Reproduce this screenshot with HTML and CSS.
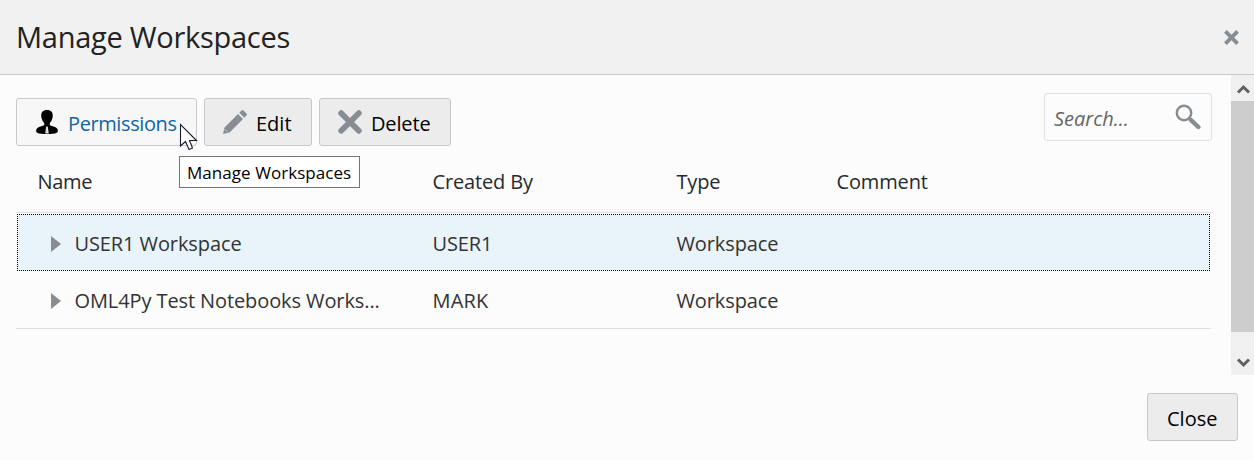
FILE: index.html
```html
<!DOCTYPE html>
<html lang="en">
<head>
<meta charset="utf-8">
<title>Manage Workspaces</title>
<link rel="stylesheet" href="styles.css">
</head>
<body>
<div class="dialog">
  <header class="header">
    <h1 class="title">Manage Workspaces</h1>
    <svg class="dismiss" viewBox="0 0 16 16"><path d="M2.300 2.300 13.700 13.700M13.700 2.300 2.300 13.700" stroke="#878d92" stroke-width="3.600" fill="none"/></svg>
  </header>
  <div class="body">
    <main class="content">
      <div class="toolbar">
        <button class="btn btn-permissions">
          <svg class="icon" viewBox="0 0 24 24"><path d="M12 0c4.300 0 6.200 2.700 5.700 6.500-.3 3-1.500 5-2.900 6.500v2.200c3 1 6.200 1.500 7.500 3.600.9 1.500.8 3.200-.4 4C19.500 24 16 24 12 24S4.500 24 2.100 22.800c-1.200-.8-1.300-2.500-.4-4 1.300-2.100 4.500-2.600 7.500-3.600V13C7.800 11.500 6.600 9.500 6.300 6.500 5.800 2.700 7.700 0 12 0z" fill="#000"/><path d="M11.200 16.500h1.600l1 7h-3.600z" fill="#ddd"/></svg>
          <span>Permissions</span>
        </button>
        <button class="btn btn-edit">
          <svg class="icon" viewBox="0 0 24 24"><path d="M0 24 1.500 17.500 15 4l5 5L6.500 22.500zM16.300 2.800 18.500.6Q19.500-.4 20.500.6L23.400 3.500Q24.400 4.500 23.400 5.500L21.300 7.700z" fill="#878d92"/><path d="M1.500 19 5 22.500" stroke="#c8cacc"/></svg>
          <span>Edit</span>
        </button>
        <button class="btn btn-delete">
          <svg class="icon" viewBox="0 0 24 24"><path d="M3.200 3.200 20.800 20.800M20.800 3.200 3.200 20.800" stroke="#878d92" stroke-width="5.800" stroke-linecap="round"/></svg>
          <span>Delete</span>
        </button>
        <div class="search">
          <span class="placeholder">Search...</span>
          <svg class="search-icon" viewBox="0 0 26 26"><circle cx="9" cy="9" r="7.200" fill="none" stroke="#878d92" stroke-width="2.400"/><path d="M15.800 15.800 23.300 23" stroke="#878d92" stroke-width="4.400" stroke-linecap="round"/></svg>
        </div>
      </div>
      <div class="table">
        <div class="row head"><span class="c-name">Name</span><span>Created By</span><span>Type</span><span>Comment</span></div>
        <div class="row selected"><span class="c-name"><i class="arrow"></i><span>USER1 Workspace</span></span><span>USER1</span><span>Workspace</span></div>
        <div class="row last"><span class="c-name"><i class="arrow"></i><span>OML4Py Test Notebooks Works...</span></span><span class="owner">MARK</span><span>Workspace</span></div>
      </div>
    </main>
    <div class="scrollbar">
      <svg class="chevron" viewBox="0 0 23 26"><path d="M7 17.500 12.500 12 18 17.500" fill="none" stroke="#606060" stroke-width="3"/></svg>
      <div class="thumb"></div>
      <svg class="chevron" viewBox="0 0 23 26"><path d="M7 10.500 12.500 16 18 10.500" fill="none" stroke="#606060" stroke-width="3"/></svg>
    </div>
  </div>
  <footer class="footer"><button class="btn btn-close"><span>Close</span></button></footer>
  <div class="tooltip">Manage Workspaces</div>
  <svg class="cursor" viewBox="0 0 20 28"><path d="M1.500 1.500V23L6.500 18.500 10 26.500 13.500 25 10.500 17.500H17.500z" fill="#fff" stroke="#1a1a2a" stroke-width="1.100"/></svg>
</div>
</body>
</html>
```
FILE: styles.css
```css
* { box-sizing: border-box; }
body { margin: 0; font: 20px/28px "Open Sans", "Noto Sans", sans-serif; color: #333; background: #fcfcfc; }
.dialog { position: relative; width: 1254px; height: 460px; display: flex; flex-direction: column; overflow: hidden; }
.header { height: 75px; flex: none; display: flex; justify-content: space-between; padding: 17px 14px 0 16px; background: #f1f1f1; border-bottom: 1px solid #c8c8c8; }
.title { margin: 0; font-size: 29px; line-height: 40px; font-weight: 400; color: #222; white-space: nowrap; letter-spacing: -0.27px; }
.dismiss { width: 17px; height: 17px; margin-top: 12px; }
.body { height: 300px; flex: none; display: flex; justify-content: space-between; }
.content { width: 1212px; padding: 18px 0 0 16px; }
.toolbar { display: flex; align-items: flex-start; height: 76px; }
.btn { height: 48px; display: flex; align-items: center; border: 1px solid #c8c8c8; border-radius: 3px; background: #ececec; color: #000; font: inherit; margin: 5px 7px 0 0; padding: 4px 0 0 18px; white-space: nowrap; }
.icon { width: 24px; height: 24px; margin: -4px 9px 0 0; flex: none; }
.btn-permissions { width: 181px; background: #f7f7f7; color: #1164a3; letter-spacing: -0.4px; }
.btn-edit { width: 108px; }
.btn-delete { width: 132px; letter-spacing: -0.15px; }
.search { width: 168px; height: 48px; margin-left: auto; border: 1px solid #e1e1e1; border-radius: 3px; display: flex; justify-content: space-between; align-items: center; padding: 0 10px 0 9px; color: #666; font-style: italic; }
.placeholder { padding-top: 3px; }
.search-icon { width: 26px; height: 26px; }
.row { display: grid; grid-template-columns: 417px 244px 160px 1fr; align-items: center; height: 57px; width: 1195px; white-space: nowrap; letter-spacing: -0.1px; }
.row > span { padding-top: 2px; margin-left: -0.5px; }
.head { height: 44px; align-items: start; border-bottom: 1px solid #e1e1e1; color: #262a2e; margin-bottom: 1px; letter-spacing: -0.15px; }
.head > span { padding-top: 0; margin-top: -1px; }
.head .c-name { padding-left: 22px; letter-spacing: -0.35px; }
.c-name { display: flex; align-items: center; }
.selected { background: #e8f3fa; border: 1px dotted #000; margin-left: 1px; width: 1193px; grid-template-columns: 415px 244px 160px 1fr; }
.selected .c-name { padding-left: 33px; }
.last { border-bottom: 1px solid #dfdfdf; height: 58px; }
.last .c-name { padding-left: 35px; }
.owner { letter-spacing: 0.2px; }
.arrow { border-left: 10px solid #878d92; border-top: 8px solid transparent; border-bottom: 8px solid transparent; margin-right: 14px; }
.scrollbar { width: 23px; background: #f0f0f0; display: flex; flex-direction: column; }
.thumb { height: 231px; background: #cdcdcd; margin-bottom: 17px; }
.chevron { width: 23px; height: 26px; flex: none; }
.footer { display: flex; justify-content: flex-end; padding: 13px 9px 0 0; }
.btn-close { width: 91px; padding-left: 19px; }
.tooltip { position: absolute; left: 179px; top: 156px; width: 181px; height: 32px; border: 1px solid #767676; background: #fff; color: #000; font-size: 17px; line-height: 32px; padding-left: 7px; white-space: nowrap; letter-spacing: 0.05px; }
.cursor { position: absolute; left: 179px; top: 123px; width: 20px; height: 28px; }
```
